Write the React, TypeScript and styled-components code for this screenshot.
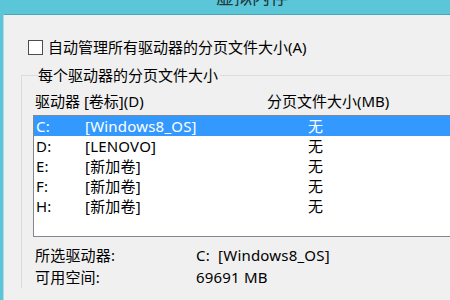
import React from "react";
import styled, { createGlobalStyle } from "styled-components";

const GlobalStyle = createGlobalStyle`
  html, body {
    margin: 0;
    padding: 0;
    width: 450px;
    height: 300px;
    overflow: hidden;
  }
  body {
    font-family: "Noto Sans", "Noto Sans CJK SC", sans-serif;
    color: #000;
  }
`;

const Frame = styled.div`
  width: 450px;
  height: 300px;
  background: #5cc6d9;
  display: flex;
  flex-direction: column;
  overflow: hidden;
`;

const TitleBar = styled.div`
  height: 14px;
  flex: none;
  display: flex;
  justify-content: center;
  align-items: flex-end;
  overflow: hidden;
  padding-bottom: 8px;
  box-sizing: border-box;
  padding-left: 54px;
`;

const Title = styled.span`
  font-family: "Noto Sans CJK SC", sans-serif;
  font-size: 18px;
  line-height: 20px;
  color: #1c3a40;
  white-space: nowrap;
`;

const Body = styled.div`
  flex: 1;
  margin-left: 3px;
  background: #f0f0f0;
  border-left: 1px solid #b8d7de;
  border-top: 1px solid #4aa7b8;
  padding: 25px 0 0 17px;
  font-size: 15px;
`;

const CheckRow = styled.label`
  display: flex;
  align-items: center;
  gap: 5px;
  margin-left: 7px;
  height: 15px;
  line-height: 15px;
  white-space: nowrap;
`;

const Box = styled.span`
  width: 13px;
  height: 13px;
  border: 1px solid #4d4d4d;
  background: #fff;
  flex: none;
`;

const Group = styled.fieldset`
  margin: 10px 0 0 0;
  padding: 6px 0 0 11px;
  border: 1px solid #dcdcdc;
  border-right: none;
  border-bottom: none;
  min-width: 0;
`;

const Legend = styled.legend`
  padding: 0 2px 0 0;
  margin-left: 5px;
  line-height: 20px;
  white-space: nowrap;
`;

const HeaderRow = styled.div`
  display: grid;
  grid-template-columns: 232px 1fr;
  padding-left: 2px;
  line-height: 20px;
  white-space: nowrap;
`;

const List = styled.div`
  margin-top: 4px;
  height: 120px;
  border: 1px solid #828790;
  border-right: none;
  background: #fff;
`;

const Row = styled.div<{ $selected?: boolean }>`
  display: grid;
  grid-template-columns: 49px 223px 1fr;
  height: 20px;
  line-height: 20px;
  padding-left: 2px;
  white-space: nowrap;
  letter-spacing: 0.2px;
  background: ${(p) => (p.$selected ? "#3399ff" : "transparent")};
  color: ${(p) => (p.$selected ? "#fff" : "#000")};
`;

const Info = styled.div`
  margin-top: 7px;
  padding-left: 2px;
`;

const InfoRow = styled.div`
  display: grid;
  grid-template-columns: 161px 1fr;
  line-height: 22px;
  white-space: nowrap;
  letter-spacing: 0.2px;
`;

const drives = [
  { letter: "C:", label: "[Windows8_OS]", size: "无" },
  { letter: "D:", label: "[LENOVO]", size: "无" },
  { letter: "E:", label: "[新加卷]", size: "无" },
  { letter: "F:", label: "[新加卷]", size: "无" },
  { letter: "H:", label: "[新加卷]", size: "无" },
];

export default function App() {
  return (
    <>
      <GlobalStyle />
      <Frame>
        <TitleBar>
          <Title>虚拟内存</Title>
        </TitleBar>
        <Body>
          <CheckRow>
            <Box />
            自动管理所有驱动器的分页文件大小(A)
          </CheckRow>
          <Group>
            <Legend>每个驱动器的分页文件大小</Legend>
            <HeaderRow>
              <span>驱动器 [卷标](D)</span>
              <span>分页文件大小(MB)</span>
            </HeaderRow>
            <List>
              {drives.map((d, i) => (
                <Row key={d.letter} $selected={i === 0}>
                  <span>{d.letter}</span>
                  <span>{d.label}</span>
                  <span>{d.size}</span>
                </Row>
              ))}
            </List>
            <Info>
              <InfoRow>
                <span>所选驱动器:</span>
                <span>C:&nbsp; [Windows8_OS]</span>
              </InfoRow>
              <InfoRow>
                <span>可用空间:</span>
                <span>69691 MB</span>
              </InfoRow>
            </Info>
          </Group>
        </Body>
      </Frame>
    </>
  );
}
